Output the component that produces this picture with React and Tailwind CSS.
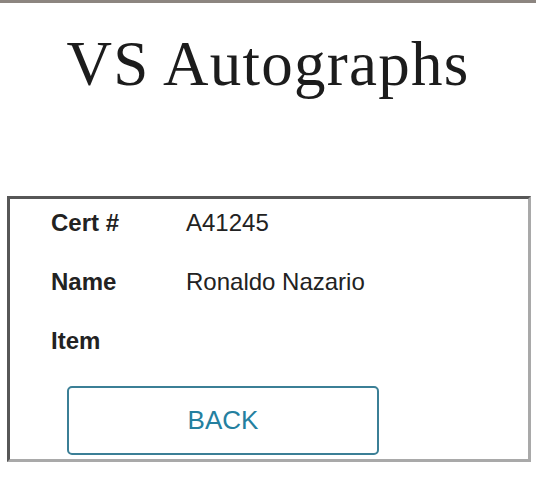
import React from "react";

const rows = [
  { label: "Cert #", value: "A41245" },
  { label: "Name", value: "Ronaldo Nazario" },
  { label: "Item", value: "" },
];

export default function App() {
  return (
    <div className="min-h-[500px] bg-white font-['Liberation_Sans',Arial,sans-serif]">
      {/* top rule */}
      <div className="h-[3px] bg-[#8c8580]" />

      <h1 className="mt-[25px] text-center font-['Liberation_Serif','Times_New_Roman',serif] text-[63px] leading-[72px] tracking-[1.25px] text-[#1c1c1c]">
        VS Autographs
      </h1>

      {/* cert panel */}
      <div className="mx-[7px] mt-[96px] w-[524px] border-[3px] border-t-[#575757] border-l-[#575757] border-r-[#a9a9a9] border-b-[#a9a9a9] pt-[10px] pb-[4px]">
        <div className="flex flex-col gap-[32px]">
          {rows.map((r) => (
            <div key={r.label} className="flex h-[27px] text-[24px] leading-[27px] text-[#222]">
              <div className="w-[176px] pl-[41px] font-bold">{r.label}</div>
              <div>{r.value}</div>
            </div>
          ))}
          <button className="ml-[57px] flex h-[69px] w-[312px] items-center justify-center rounded-[5px] border-2 border-[#3b7f96] bg-white text-[26px] text-[#24809f]">
            BACK
          </button>
        </div>
      </div>
    </div>
  );
}
